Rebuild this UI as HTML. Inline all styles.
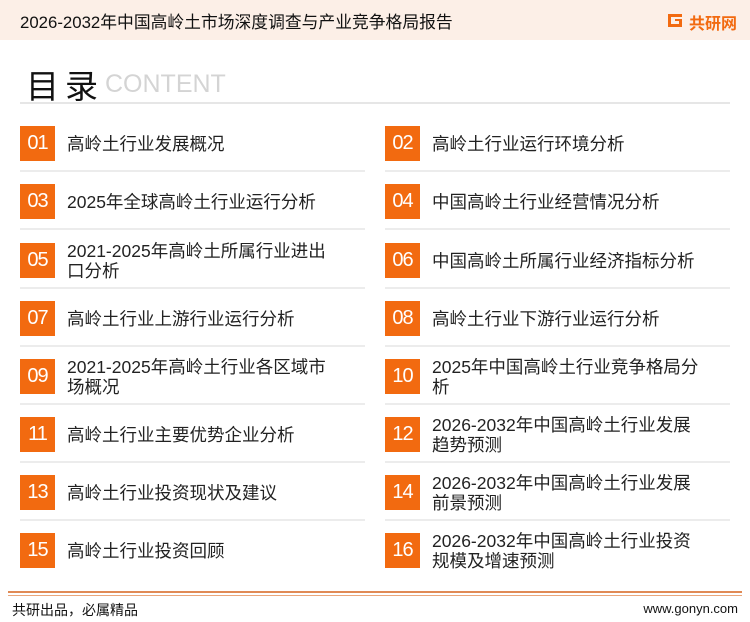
<!DOCTYPE html>
<html><head><meta charset="utf-8"><style>
*{margin:0;padding:0;box-sizing:border-box}
body{width:750px;height:622px;background:#fff;position:relative;overflow:hidden;font-family:"Liberation Sans","Noto Sans CJK SC",sans-serif;color:#222}
.hdr{position:absolute;left:0;top:0;width:750px;height:40px;background:#fcefe7}
.hdr .t{position:absolute;left:20px;top:9px;font-size:16.8px;color:#111;white-space:nowrap}
.logo{position:absolute;left:666px;top:11px;height:18px}
.logo .tx{position:absolute;left:23px;top:-1px;font-size:16px;font-weight:bold;color:#f26a10;white-space:nowrap}
.ttl{position:absolute;left:26px;top:60px;font-size:33px;color:#111;letter-spacing:6px}
.cnt{position:absolute;left:105px;top:70px;font-size:25px;color:#d4d4d4}
.ln{position:absolute;left:20px;top:102px;width:710px;height:2px;background:#e6e6e6}
.it{position:absolute;width:345px;height:46px}
.it .b{position:absolute;left:0;top:0;width:35px;height:35px;background:#f26a10;color:#fff;font-size:20px;text-align:center;line-height:35px;letter-spacing:-1px}
.it .x{position:absolute;left:47px;top:0;height:35px;display:flex;align-items:center;font-size:17.5px;line-height:20px;color:#222;white-space:nowrap}
.it .s{position:absolute;left:0;top:44px;width:345px;height:2px;background:#ececec}
.bl1{position:absolute;left:8px;top:591px;width:734px;height:2px;background:#e08a55}
.bl2{position:absolute;left:8px;top:595px;width:734px;height:1px;background:#e9a77d}
.ft{position:absolute;left:12px;top:600px;font-size:14px;color:#111}
.fr{position:absolute;right:12px;top:601px;font-size:13px;color:#111}
</style></head><body>
<div class="hdr"><div class="t">2026-2032年中国高岭土市场深度调查与产业竞争格局报告</div>
<div class="logo"><svg width="18" height="18" viewBox="0 0 18 18"><path d="M2 3h14v3H5v7h8v-3H9V8h7v8H2z" fill="#f26a10"/></svg><span class="tx">共研网</span></div></div>
<div class="ttl">目录</div><div class="cnt">CONTENT</div>
<div class="ln"></div>

<div class="it" style="left:20px;top:126px"><div class="b">01</div><div class="x">高岭土行业发展概况</div><div class="s"></div></div>
<div class="it" style="left:385px;top:126px"><div class="b">02</div><div class="x">高岭土行业运行环境分析</div><div class="s"></div></div>
<div class="it" style="left:20px;top:184px"><div class="b">03</div><div class="x">2025年全球高岭土行业运行分析</div><div class="s"></div></div>
<div class="it" style="left:385px;top:184px"><div class="b">04</div><div class="x">中国高岭土行业经营情况分析</div><div class="s"></div></div>
<div class="it" style="left:20px;top:243px"><div class="b">05</div><div class="x">2021-2025年高岭土所属行业进出<br>口分析</div><div class="s"></div></div>
<div class="it" style="left:385px;top:243px"><div class="b">06</div><div class="x">中国高岭土所属行业经济指标分析</div><div class="s"></div></div>
<div class="it" style="left:20px;top:301px"><div class="b">07</div><div class="x">高岭土行业上游行业运行分析</div><div class="s"></div></div>
<div class="it" style="left:385px;top:301px"><div class="b">08</div><div class="x">高岭土行业下游行业运行分析</div><div class="s"></div></div>
<div class="it" style="left:20px;top:359px"><div class="b">09</div><div class="x">2021-2025年高岭土行业各区域市<br>场概况</div><div class="s"></div></div>
<div class="it" style="left:385px;top:359px"><div class="b">10</div><div class="x">2025年中国高岭土行业竞争格局分<br>析</div><div class="s"></div></div>
<div class="it" style="left:20px;top:417px"><div class="b">11</div><div class="x">高岭土行业主要优势企业分析</div><div class="s"></div></div>
<div class="it" style="left:385px;top:417px"><div class="b">12</div><div class="x">2026-2032年中国高岭土行业发展<br>趋势预测</div><div class="s"></div></div>
<div class="it" style="left:20px;top:475px"><div class="b">13</div><div class="x">高岭土行业投资现状及建议</div><div class="s"></div></div>
<div class="it" style="left:385px;top:475px"><div class="b">14</div><div class="x">2026-2032年中国高岭土行业发展<br>前景预测</div><div class="s"></div></div>
<div class="it" style="left:20px;top:533px"><div class="b">15</div><div class="x">高岭土行业投资回顾</div></div>
<div class="it" style="left:385px;top:533px"><div class="b">16</div><div class="x">2026-2032年中国高岭土行业投资<br>规模及增速预测</div></div>

<div class="bl1"></div><div class="bl2"></div>
<div class="ft">共研出品，必属精品</div>
<div class="fr">www.gonyn.com</div>
</body></html>
